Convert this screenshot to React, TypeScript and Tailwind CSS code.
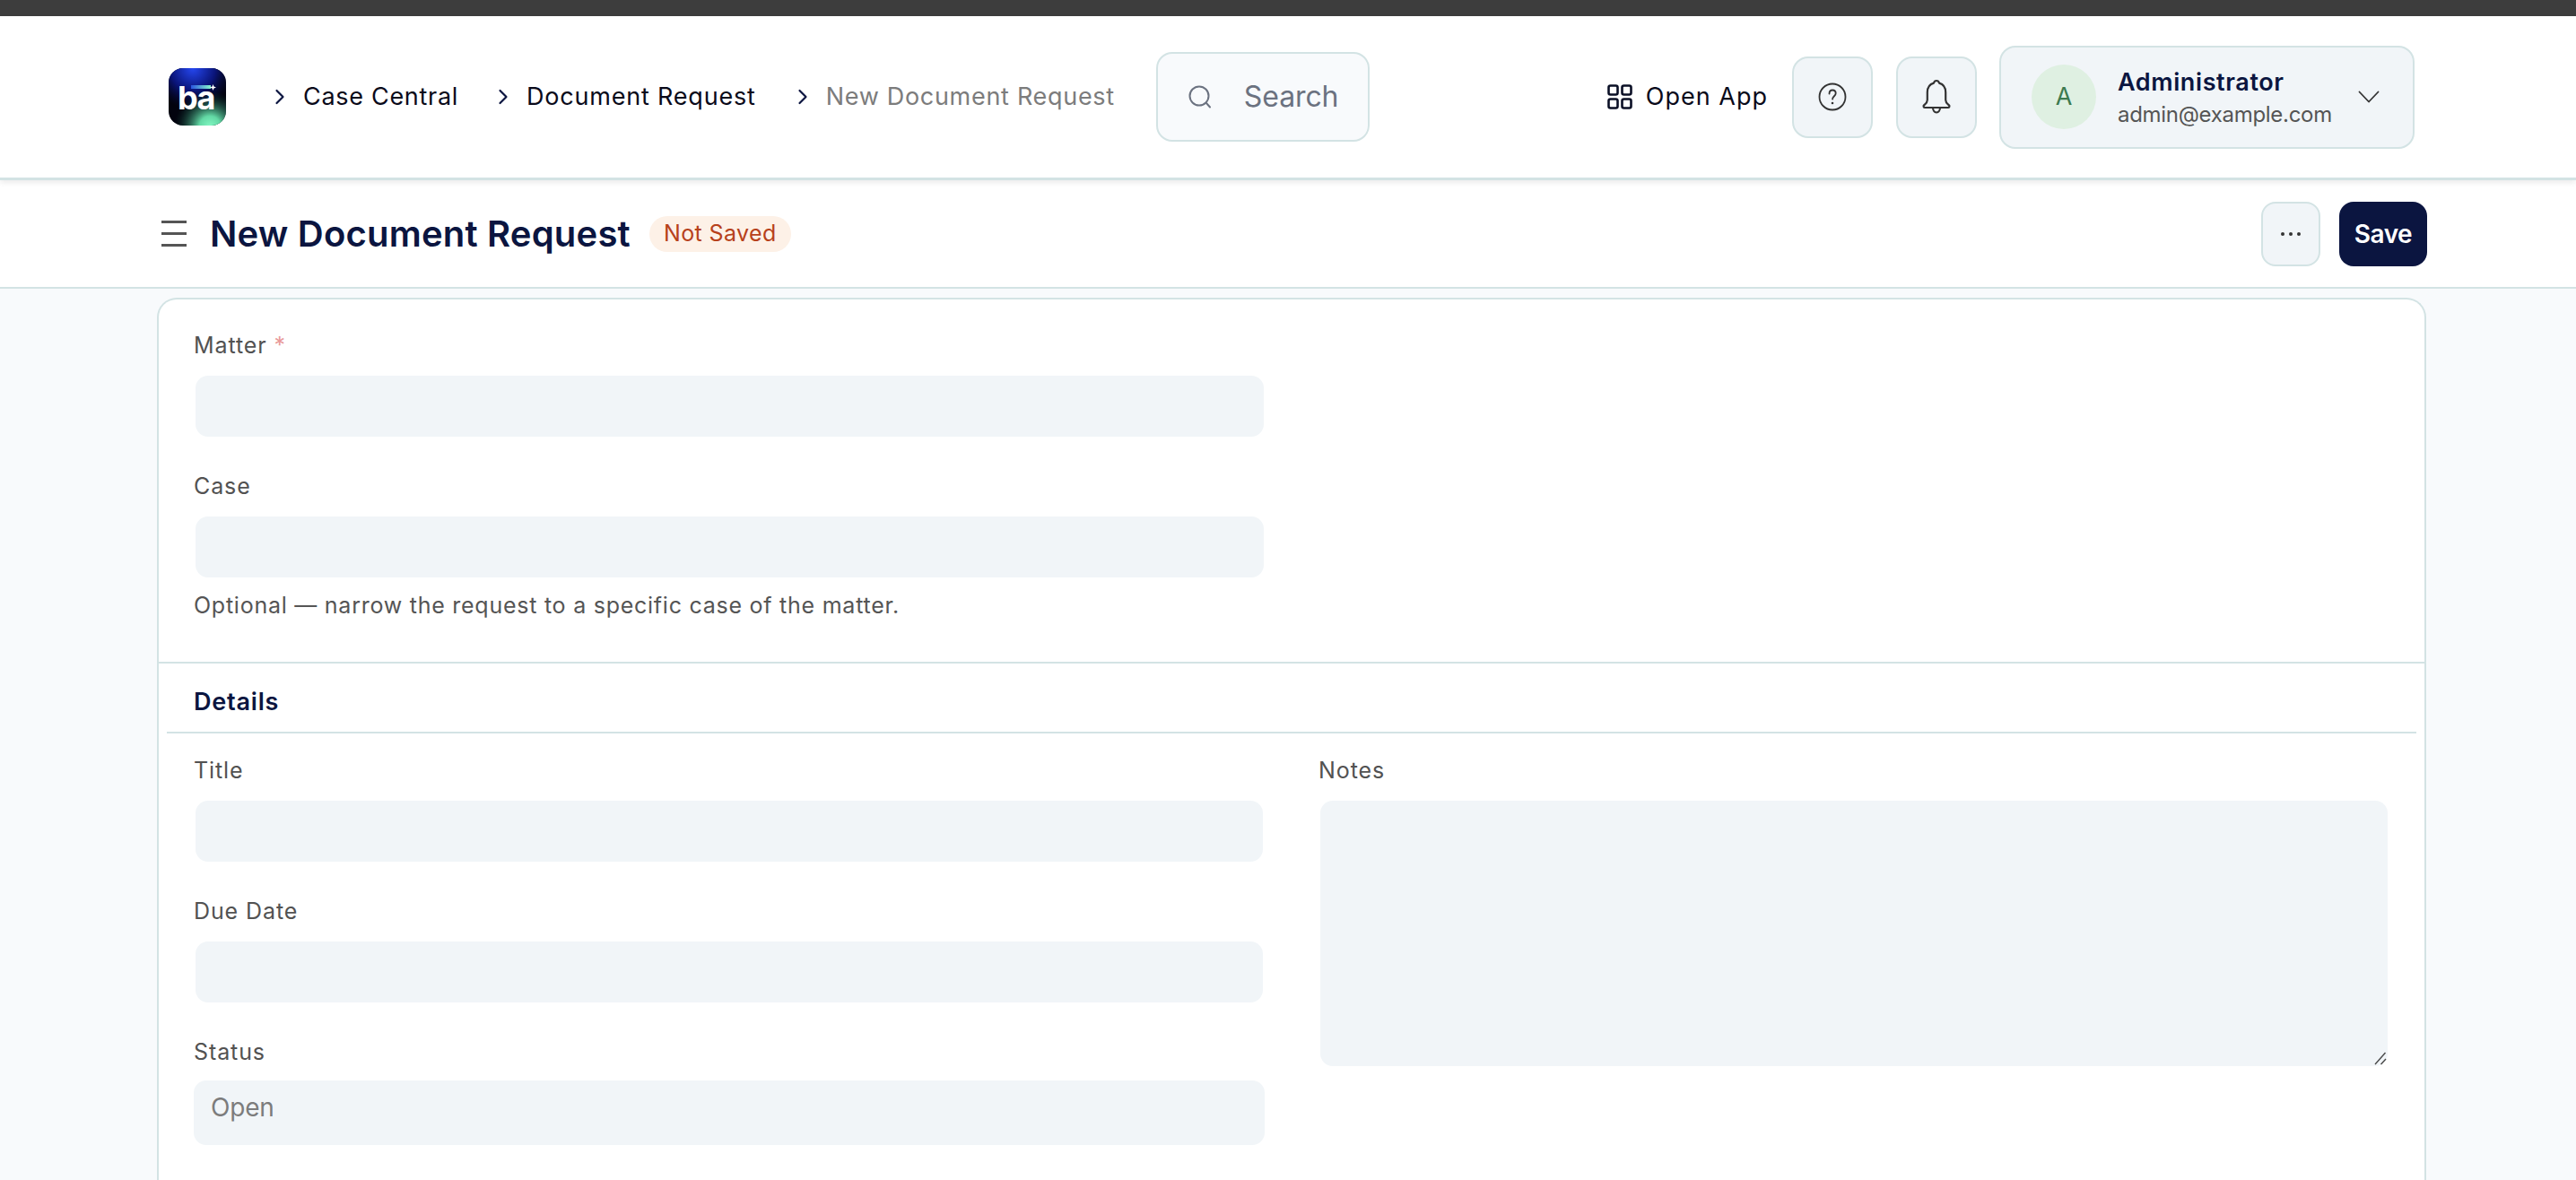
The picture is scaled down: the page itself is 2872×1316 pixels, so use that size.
import React from "react";

const Chevron = () => (
  <svg width="12" height="18" viewBox="0 0 12 18" fill="none" className="shrink-0">
    <path d="M2.5 2l7 7-7 7" stroke="#0b1540" strokeWidth="2.2" strokeLinecap="round" strokeLinejoin="round" />
  </svg>
);

const Logo = () => (
  <svg width="64" height="64" viewBox="0 0 64 64" className="shrink-0">
    <defs>
      <radialGradient id="lg1" cx="0.42" cy="0" r="0.72">
        <stop offset="0" stopColor="#2547f0" />
        <stop offset="0.55" stopColor="#0a1478" />
        <stop offset="1" stopColor="#050a3a" stopOpacity="0" />
      </radialGradient>
      <radialGradient id="lg2" cx="0.72" cy="1.02" r="0.62">
        <stop offset="0" stopColor="#84f8c4" />
        <stop offset="0.3" stopColor="#62d8a4" />
        <stop offset="1" stopColor="#0a3a30" stopOpacity="0" />
      </radialGradient>
      <linearGradient id="lg3" x1="0" x2="1" y1="0" y2="0">
        <stop offset="0" stopColor="#2a55e0" />
        <stop offset="1" stopColor="#86f5cc" />
      </linearGradient>
      <clipPath id="lc">
        <rect width="64" height="64" rx="16" />
      </clipPath>
    </defs>
    <g clipPath="url(#lc)">
      <rect width="64" height="64" fill="#02030e" />
      <rect width="64" height="64" fill="url(#lg1)" />
      <rect width="64" height="64" fill="url(#lg2)" />
    </g>
    <text x="10" y="46" fill="#ffffff" fontFamily="Inter, sans-serif" fontWeight="700" fontSize="36" letterSpacing="-1.5">ba</text>
    <rect x="25" y="19" width="22" height="4" fill="url(#lg3)" />
    <path d="M49.5 18l1 2.5 2.5 1-2.5 1-1 2.5-1-2.5-2.5-1 2.5-1z" fill="#ffffff" />
  </svg>
);

const Field = ({ label, required, children }: { label: string; required?: boolean; children: React.ReactNode }) => (
  <div className="flex flex-col">
    <label className="h-[40px] leading-[40px] mb-[14px] text-[25px] tracking-[0.9px] text-[#525252]">
      {label}
      {required && <span className="ml-[8px] text-[#e99a9a]">*</span>}
    </label>
    {children}
  </div>
);

const TextBox = () => (
  <input type="text" className="ml-[2px] mr-[2px] block h-[68px] rounded-[14px] bg-[#f1f5f8] outline-none" />
);

export default function App() {
  return (
    <div className="h-[1316px] overflow-hidden bg-[#f8fafc] [font-family:Inter,sans-serif] flex flex-col">
      <div className="h-[18px] shrink-0 bg-[#3d3d3d]" />

      <header className="relative z-10 h-[183px] shrink-0 bg-white border-b-[3px] border-[#d3e3e4] shadow-[0_3px_6px_rgba(0,0,0,0.08)] flex items-center pl-[188px] pr-[180px]">
        <Logo />
        <div className="ml-[54px]"><Chevron /></div>
        <span className="ml-[20px] text-[27px] tracking-[0.7px] text-[#0a0a1a]">Case Central</span>
        <div className="ml-[44px]"><Chevron /></div>
        <span className="ml-[20px] text-[27px] tracking-[0.8px] text-[#0a0a1a]">Document Request</span>
        <div className="ml-[46px]"><Chevron /></div>
        <span className="ml-[20px] text-[27px] tracking-[0.7px] text-[#7c7c7c]">New Document Request</span>
        <div className="ml-[46px] flex h-[100px] w-[238px] items-center rounded-[18px] border-[2px] border-[#d3e3e4] bg-[#f8fafc] pl-[34px]">
          <svg width="26" height="26" viewBox="0 0 26 26" fill="none" className="shrink-0">
            <circle cx="12" cy="12" r="10.5" stroke="#6b7280" strokeWidth="2" />
            <path d="M20 20l4 4.5" stroke="#6b7280" strokeWidth="2" strokeLinecap="round" />
          </svg>
          <span className="ml-[36px] text-[32px] tracking-[-0.1px] text-[#6b7280]">Search</span>
        </div>

        <div className="ml-auto flex items-center">
          <svg width="28" height="28" viewBox="0 0 28 28" fill="none" className="shrink-0">
            <rect x="1.5" y="1.5" width="10" height="10" rx="2" stroke="#0b1026" strokeWidth="2.6" />
            <rect x="16.5" y="1.5" width="10" height="10" rx="2" stroke="#0b1026" strokeWidth="2.6" />
            <rect x="1.5" y="16.5" width="10" height="10" rx="2" stroke="#0b1026" strokeWidth="2.6" />
            <rect x="16.5" y="16.5" width="10" height="10" rx="2" stroke="#0b1026" strokeWidth="2.6" />
          </svg>
          <span className="ml-[15px] text-[27px] tracking-[1px] text-[#0a0a1a]">Open App</span>
          <button className="ml-[27px] flex h-[91px] w-[90px] items-center justify-center rounded-[18px] border-[2px] border-[#d3e3e4] bg-[#f1f5f8]">
            <svg width="32" height="32" viewBox="0 0 32 32" fill="none">
              <circle cx="16" cy="16" r="14.5" stroke="#333333" strokeWidth="1.8" />
              <path d="M12.5 12.5c0-2.4 1.5-4 3.6-4 2.1 0 3.6 1.5 3.6 3.6 0 3-3.6 3.3-3.6 6.4" stroke="#333333" strokeWidth="1.8" strokeLinecap="round" />
              <circle cx="16" cy="23" r="1.3" fill="#333333" />
            </svg>
          </button>
          <button className="ml-[26px] flex h-[91px] w-[90px] items-center justify-center rounded-[18px] border-[2px] border-[#d3e3e4] bg-[#f1f5f8]">
            <svg width="34" height="40" viewBox="0 0 34 40" fill="none">
              <path d="M17 2c1.6 0 2.6 1 3 2.6 4.6 1.3 7.2 5.3 7.2 10.4v8.5c0 3 1.5 3.8 3.8 5.8.9.9.4 2.7-1.2 2.7H4.2c-1.6 0-2.1-1.8-1.2-2.7 2.3-2 3.8-2.8 3.8-5.8V15c0-5.1 2.6-9.1 7.2-10.4C14.4 3 15.4 2 17 2z" stroke="#333333" strokeWidth="2.2" strokeLinejoin="round" />
              <path d="M13 32c0 3 1.8 5.5 4 5.5s4-2.5 4-5.5" stroke="#333333" strokeWidth="2.2" />
            </svg>
          </button>
          <button className="ml-[25px] flex h-[115px] w-[463px] items-center rounded-[18px] border-[2px] border-[#d3e3e4] bg-[#f1f5f8] pl-[34px]">
            <span className="flex h-[72px] w-[72px] shrink-0 items-center justify-center rounded-full bg-[#dff0e2] text-[27px] text-[#3d7a4f]">A</span>
            <span className="ml-[24px] flex flex-col items-start pt-[2px]">
              <span className="text-[27px] leading-[38px] font-semibold tracking-[0.6px] text-[#0b1540]">Administrator</span>
              <span className="text-[24px] leading-[34px] tracking-[-0.3px] text-[#555555]">admin@example.com</span>
            </span>
            <svg width="24" height="14" viewBox="0 0 24 14" fill="none" className="ml-auto mr-[37px]">
              <path d="M1.5 1.5L12 12.5 22.5 1.5" stroke="#333333" strokeWidth="1.8" strokeLinecap="round" strokeLinejoin="round" />
            </svg>
          </button>
        </div>
      </header>

      <div className="h-[121px] shrink-0 bg-white border-b-[2px] border-[#d3e3e4] flex items-center pl-[180px] pr-[166px]">
        <div className="flex w-[28px] flex-col gap-[10px]">
          <span className="h-[3px] bg-[#555555]" />
          <span className="h-[3px] bg-[#555555]" />
          <span className="h-[3px] bg-[#555555]" />
        </div>
        <h1 className="ml-[26px] text-[40px] font-semibold tracking-[0.2px] text-[#0b1540]">New Document Request</h1>
        <span className="ml-[21px] flex h-[40px] items-center rounded-full bg-[#fdf1e7] px-[16px] text-[25px] tracking-[0.4px] text-[#b7411b]">Not Saved</span>
        <div className="ml-auto flex items-center gap-[21px]">
          <button className="flex h-[72px] w-[66px] items-center justify-center gap-[5px] rounded-[16px] border-[2px] border-[#d3e3e4] bg-[#f1f5f8]">
            <span className="h-[4px] w-[4px] rounded-full bg-[#333333]" />
            <span className="h-[4px] w-[4px] rounded-full bg-[#333333]" />
            <span className="h-[4px] w-[4px] rounded-full bg-[#333333]" />
          </button>
          <button className="flex h-[72px] w-[98px] items-center justify-center rounded-[16px] bg-[#0b1540] text-[28px] font-semibold tracking-[-0.5px] text-white">Save</button>
        </div>
      </div>

      <div className="pl-[175px] pr-[167px] pt-[10px]">
        <div className="rounded-t-[22px] border-[2px] border-b-0 border-[#d3e3e4] bg-white h-[1100px]">
          <div className="pt-[31px] pl-[39px] pr-[1292px] pb-[45px]">
            <Field label="Matter" required><TextBox /></Field>
            <div className="mt-[35px]"><Field label="Case"><TextBox /></Field></div>
            <p className="mt-[13px] text-[25px] leading-[36px] tracking-[0.75px] text-[#555555]">Optional — narrow the request to a specific case of the matter.</p>
          </div>
          <div className="border-t-[2px] border-[#d3e3e4]">
            <div className="ml-[9px] mr-[9px] border-b-[2px] border-[#d3e3e4] pl-[30px] pt-[23px] pb-[13px]">
              <div className="h-[40px] text-[27px] leading-[40px] font-semibold tracking-[0.8px] text-[#0b1540]">Details</div>
            </div>
            <div className="grid grid-cols-[1194px_1194px] gap-[60px] pl-[39px] pt-[21px]">
              <div className="flex flex-col">
                <Field label="Title"><TextBox /></Field>
                <div className="mt-[35px]"><Field label="Due Date"><TextBox /></Field></div>
                <div className="mt-[35px]">
                  <Field label="Status">
                    <div className="-mt-[2px] flex h-[72px] items-center rounded-[14px] bg-[#f1f5f8] pl-[19px] pb-[12px] text-[28px] tracking-[-0.2px] text-[#7c7c7c]">Open</div>
                  </Field>
                </div>
              </div>
              <div>
                <Field label="Notes">
                  <div className="relative ml-[2px] mr-[2px]">
                    <textarea className="block h-[296px] w-full rounded-[14px] bg-[#f1f5f8] outline-none resize-none" />
                    <svg width="14" height="16" viewBox="0 0 14 16" fill="none" className="pointer-events-none absolute bottom-[1px] right-[1px]">
                      <path d="M1 15L12.5 2M7.5 15L13 9" stroke="#4a4a4a" strokeWidth="1.4" />
                    </svg>
                  </div>
                </Field>
              </div>
            </div>
          </div>
        </div>
      </div>
    </div>
  );
}
